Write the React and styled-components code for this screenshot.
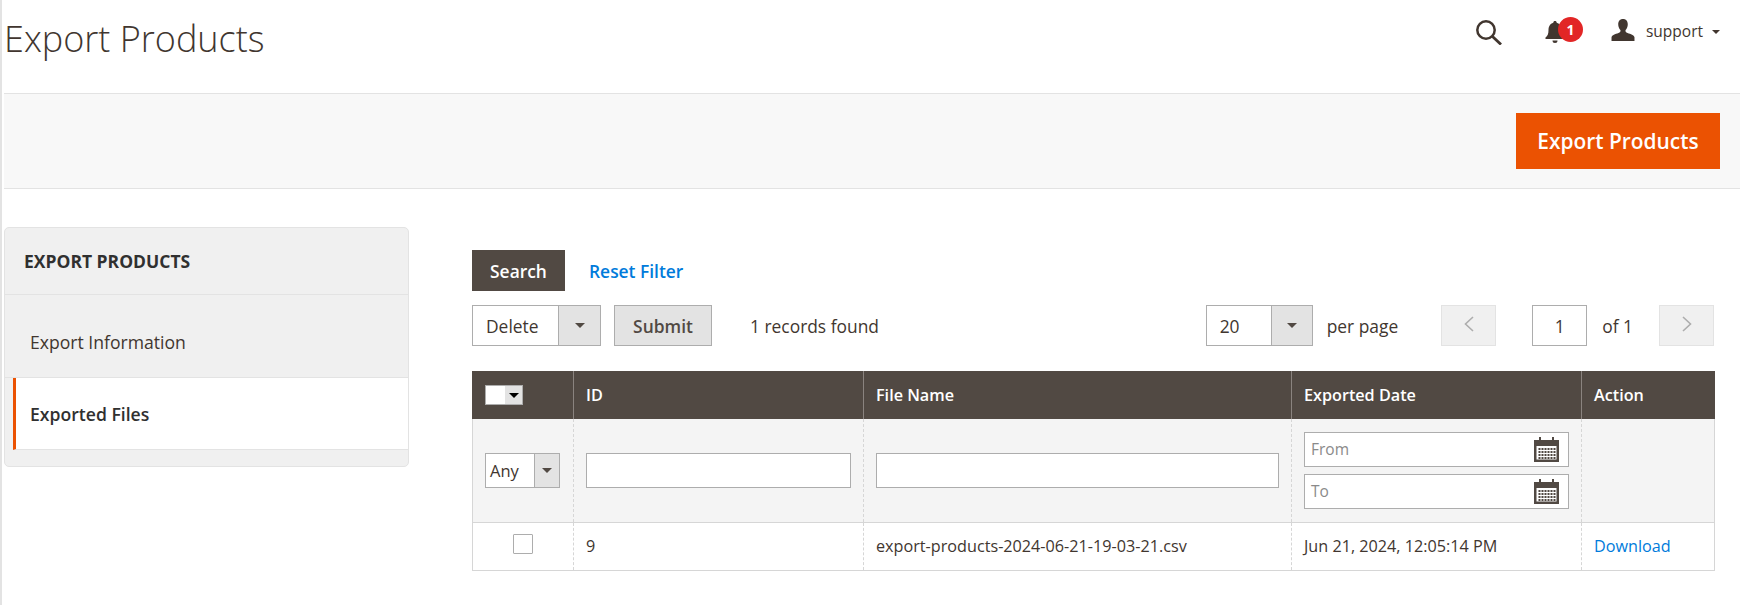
import React from 'react'
import styled, { createGlobalStyle } from 'styled-components'

const GlobalStyle = createGlobalStyle`
  * { box-sizing: border-box; }
  html, body { margin: 0; padding: 0; background: #fff; }
  body {
    font-family: "Open Sans", "Liberation Sans", sans-serif;
    font-size: 17.4px;
    color: #41362f;
  }
`

const Page = styled.div`
  width: 1740px;
  height: 605px;
  overflow: hidden;
  border-left: 2px solid #e3e3e3;
  padding-left: 2px;
`
const Header = styled.header`
  height: 93px;
  display: flex;
  align-items: flex-start;
  justify-content: space-between;
  padding-right: 20px;
`
const Title = styled.h1`
  margin: 16px 0 0;
  font-size: 36px;
  line-height: 46px;
  font-weight: 300;
  color: #41362f;
`
const Tools = styled.div`
  display: flex;
  align-items: center;
  height: 30px;
  margin-top: 17px;
`
const IconSlot = styled.span`
  display: flex;
  position: relative;
  margin-left: ${p => p.$left || 0}px;
  margin-top: ${p => p.$top || 0}px;
`
const Badge = styled.span`
  position: absolute;
  left: 13px;
  top: -4px;
  width: 25px;
  height: 25px;
  border-radius: 50%;
  background: #e22626;
  color: #fff;
  font-size: 14px;
  font-weight: 700;
  line-height: 25px;
  text-align: center;
`
const UserName = styled.span`
  font-size: 15.5px;
  color: #41362f;
  margin-left: 11px;
  margin-top: -3px;
`
const Caret = styled.span`
  width: 0;
  height: 0;
  margin-left: ${p => p.$left || 0}px;
  border-left: ${p => p.$size}px solid transparent;
  border-right: ${p => p.$size}px solid transparent;
  border-top: ${p => p.$size}px solid ${p => p.$color || '#514943'};
`
const ActionBar = styled.div`
  height: 96px;
  display: flex;
  align-items: center;
  justify-content: flex-end;
  padding-right: 20px;
  background: #f8f8f8;
  border-top: 1px solid #e3e3e3;
  border-bottom: 1px solid #e3e3e3;
`
const PrimaryButton = styled.button`
  width: 204px;
  height: 56px;
  border: 1px solid #eb5202;
  background: #eb5202;
  color: #fff;
  font-family: inherit;
  font-size: 20.9px;
  font-weight: 600;
  padding: 0;
`
const Content = styled.div`
  display: flex;
  align-items: flex-start;
  padding-top: 38px;
`
const Sidebar = styled.aside`
  width: 405px;
  flex: none;
  padding-bottom: 16px;
  background: #f0f0f0;
  border: 1px solid #e3e3e3;
  border-radius: 5px;
`
const SidebarTitle = styled.div`
  height: 67px;
  padding-left: 19px;
  display: flex;
  align-items: center;
  font-size: 17.5px;
  font-weight: 700;
  color: #303030;
  border-bottom: 1px solid #e3e3e3;
`
const SideItem = styled.div`
  display: flex;
  align-items: center;
  height: ${p => (p.$active ? 72 : 83)}px;
  margin-left: ${p => (p.$active ? 8 : 0)}px;
  padding-left: ${p => (p.$active ? 14 : 25)}px;
  padding-top: ${p => (p.$active ? 0 : 11)}px;
  font-size: 17.6px;
  font-weight: ${p => (p.$active ? 600 : 400)};
  color: ${p => (p.$active ? '#303030' : '#41362f')};
  background: ${p => (p.$active ? '#fff' : 'transparent')};
  border-left: ${p => (p.$active ? '3px solid #eb5202' : 'none')};
  border-bottom: 1px solid #e3e3e3;
`
const Grid = styled.section`
  width: 1242px;
  margin-left: 63px;
  padding-top: 23px;
`
const Row = styled.div`
  display: flex;
  align-items: center;
  height: 41px;
`
const PagerRow = styled(Row)`
  margin-top: 14px;
  margin-bottom: 25px;
`
const DarkButton = styled.button`
  width: 93px;
  height: 41px;
  padding: 0;
  border: 1px solid #514943;
  background: #514943;
  color: #fff;
  font-family: inherit;
  font-size: 17.4px;
  font-weight: 600;
`
const LinkText = styled.a`
  color: #007bdb;
  font-size: ${p => p.$size || 17.4}px;
  font-weight: ${p => p.$weight || 400};
  margin-left: ${p => p.$left || 0}px;
`
const SelectBox = styled.div`
  width: ${p => p.$width}px;
  height: ${p => p.$height || 41}px;
  flex: none;
  display: flex;
  background: #fff;
  border: 1px solid #adadad;
`
const SelectValue = styled.span`
  flex: 1;
  padding-left: ${p => p.$pad}px;
  display: flex;
  align-items: center;
  font-size: ${p => p.$size || 17.4}px;
  color: #41362f;
`
const SelectArrow = styled.span`
  width: ${p => p.$width}px;
  flex: none;
  display: flex;
  align-items: center;
  justify-content: center;
  background: #e3e3e3;
  border-left: 1px solid #adadad;
`
const GreyButton = styled.button`
  width: 98px;
  height: 41px;
  margin-left: 13px;
  padding: 0;
  border: 1px solid #adadad;
  background: #e3e3e3;
  color: #514943;
  font-family: inherit;
  font-size: 17.4px;
  font-weight: 600;
`
const PlainText = styled.span`
  font-size: 17.4px;
  color: #41362f;
  margin-left: ${p => p.$left}px;
`
const Spacer = styled.div`
  flex: 1;
`
const PageStep = styled.span`
  width: 55px;
  height: 41px;
  flex: none;
  display: flex;
  align-items: center;
  justify-content: center;
  padding-bottom: 3px;
  background: #f0f0f0;
  border: 1px solid #e3e3e3;
  margin-left: ${p => p.$left}px;
`
const PageInput = styled.span`
  width: 55px;
  height: 41px;
  flex: none;
  display: flex;
  align-items: center;
  justify-content: center;
  margin-left: 36px;
  font-size: 17.4px;
  background: #fff;
  border: 1px solid #adadad;
`
const Table = styled.table`
  width: 1242px;
  table-layout: fixed;
  border-collapse: collapse;
`
const HeadCell = styled.th`
  height: 48px;
  padding: 0 12px;
  background: #514943;
  color: #fff;
  font-size: 16.2px;
  font-weight: 600;
  text-align: left;
  border-left: 1px solid #8a837f;
  border-right: 1px solid #8a837f;
  &:first-child { border-left-color: #514943; }
  &:last-child { border-right-color: #514943; }
`
const HeadPicker = styled.div`
  display: flex;
  height: 20px;
  width: 38px;
  border: 1px solid #adadad;
`
const PickerBox = styled.span`
  width: 19px;
  background: #fff;
`
const PickerArrow = styled.span`
  flex: 1;
  display: flex;
  align-items: center;
  justify-content: center;
  background: #e3e3e3;
`
const FilterCell = styled.td`
  height: 103px;
  padding: 0 12px;
  background: #f4f4f4;
  vertical-align: middle;
  border-left: 1px dashed #d6d6d6;
  border-right: 1px dashed #d6d6d6;
  border-bottom: 1px solid #d6d6d6;
  &:first-child { border-left: 1px solid #d6d6d6; }
  &:last-child { border-right: 1px solid #d6d6d6; }
`
const DataCell = styled.td`
  height: 48px;
  padding: 0 12px;
  font-size: 16.2px;
  color: #41362f;
  text-align: ${p => (p.$center ? 'center' : 'left')};
  border-left: 1px dashed #d6d6d6;
  border-right: 1px dashed #d6d6d6;
  border-bottom: 1px solid #d6d6d6;
  &:first-child { border-left: 1px solid #d6d6d6; }
  &:last-child { border-right: 1px solid #d6d6d6; }
`
const TextInput = styled.div`
  height: 35px;
  background: #fff;
  border: 1px solid #adadad;
`
const DateStack = styled.div`
  display: flex;
  flex-direction: column;
  gap: 7px;
`
const DateInput = styled.div`
  height: 35px;
  display: flex;
  align-items: center;
  justify-content: space-between;
  padding: 0 9px 0 6px;
  font-size: 15.5px;
  color: #8a8a8a;
  background: #fff;
  border: 1px solid #adadad;
`
const CheckBox = styled.span`
  display: inline-block;
  width: 20px;
  height: 20px;
  vertical-align: middle;
  background: #fff;
  border: 1px solid #adadad;
  border-radius: 1px;
  margin-top: -8px;
`

const SearchIcon = () => (
  <svg width="27" height="26" viewBox="0 0 27 26" fill="none" stroke="#41362f">
    <circle cx="11" cy="11" r="8.700" strokeWidth="2.500" />
    <path d="M17.500 17.500L26 25.500" strokeWidth="2.800" />
  </svg>
)

const BellIcon = () => (
  <svg width="20" height="23" viewBox="0 0 20 23" fill="#41362f">
    <path d="M10 0c1 0 1.700.7 1.700 1.700C15 2.500 16.500 5.500 16.500 9c0 4 1 6 3 7.500V18H.5v-1.500c2-1.500 3-3.500 3-7.500 0-3.500 1.500-6.500 4.800-7.300C8.300.7 9 0 10 0z" />
    <path d="M7.500 19.500h5a2.500 2.500 0 0 1-5 0z" />
  </svg>
)

const UserIcon = () => (
  <svg width="24" height="22" viewBox="0 0 25 23" fill="#41362f">
    <path d="M12.500 0c3.300 0 5 2.300 5 5.500 0 2.500-1 4.800-2.300 6-.5 1.500.3 2.500 2 3.100 3.500 1.200 6.800 2 7.300 4.400V23H.5v-4c.5-2.400 3.800-3.200 7.300-4.400 1.700-.6 2.500-1.600 2-3.100-1.300-1.200-2.300-3.500-2.300-6C7.500 2.300 9.200 0 12.500 0z" />
  </svg>
)

const Chevron = ({ left }) => (
  <svg width="10" height="16" viewBox="0 0 10 16" fill="none" stroke="#adadad" strokeWidth="1.600">
    <path d={left ? 'M9 1L1.500 8L9 15' : 'M1 1L8.500 8L1 15'} />
  </svg>
)

const CalendarIcon = () => (
  <svg width="25" height="25" viewBox="0 0 25 25">
    <rect x="0" y="3" width="25" height="22" fill="#514943" />
    <rect x="2.500" y="9" width="20" height="13.500" fill="#fff" />
    <rect x="5" y="0" width="2" height="6" fill="#514943" />
    <rect x="18" y="0" width="2" height="6" fill="#514943" />
    {[11, 14, 17, 20].map(y =>
      [4.500, 7.500, 10.500, 13.500, 16.500, 19.500].map(x => (
        <rect key={`${x}-${y}`} x={x} y={y} width="2" height="2" fill="#514943" />
      ))
    )}
  </svg>
)

const App = () => (
  <>
    <GlobalStyle />
    <Page>
      <Header>
        <Title>Export Products</Title>
        <Tools>
          <IconSlot><SearchIcon /></IconSlot>
          <IconSlot $left={43}>
            <BellIcon />
            <Badge>1</Badge>
          </IconSlot>
          <IconSlot $left={46} $top={-4}><UserIcon /></IconSlot>
          <UserName>support</UserName>
          <Caret $size={4.500} $left={9} $color="#41362f" />
        </Tools>
      </Header>
      <ActionBar>
        <PrimaryButton>Export Products</PrimaryButton>
      </ActionBar>
      <Content>
        <Sidebar>
          <SidebarTitle>EXPORT PRODUCTS</SidebarTitle>
          <SideItem>Export Information</SideItem>
          <SideItem $active>Exported Files</SideItem>
        </Sidebar>
        <Grid>
          <Row>
            <DarkButton>Search</DarkButton>
            <LinkText $left={24} $weight={600}>Reset Filter</LinkText>
          </Row>
          <PagerRow>
            <SelectBox $width={129}>
              <SelectValue $pad={13}>Delete</SelectValue>
              <SelectArrow $width={42}><Caret $size={5} /></SelectArrow>
            </SelectBox>
            <GreyButton>Submit</GreyButton>
            <PlainText $left={38}>1 records found</PlainText>
            <Spacer />
            <SelectBox $width={107}>
              <SelectValue $pad={13}>20</SelectValue>
              <SelectArrow $width={41}><Caret $size={5} /></SelectArrow>
            </SelectBox>
            <PlainText $left={14}>per page</PlainText>
            <PageStep $left={43}><Chevron left /></PageStep>
            <PageInput>1</PageInput>
            <PlainText $left={15}>of 1</PlainText>
            <PageStep $left={26}><Chevron /></PageStep>
          </PagerRow>
          <Table>
            <colgroup>
              <col width="101" />
              <col width="290" />
              <col width="428" />
              <col width="290" />
              <col width="133" />
            </colgroup>
            <thead>
              <tr>
                <HeadCell>
                  <HeadPicker>
                    <PickerBox />
                    <PickerArrow><Caret $size={5} $color="#000" /></PickerArrow>
                  </HeadPicker>
                </HeadCell>
                <HeadCell>ID</HeadCell>
                <HeadCell>File Name</HeadCell>
                <HeadCell>Exported Date</HeadCell>
                <HeadCell>Action</HeadCell>
              </tr>
            </thead>
            <tbody>
              <tr>
                <FilterCell>
                  <SelectBox $width={75} $height={35}>
                    <SelectValue $pad={4} $size={16.500}>Any</SelectValue>
                    <SelectArrow $width={25}><Caret $size={5} /></SelectArrow>
                  </SelectBox>
                </FilterCell>
                <FilterCell><TextInput /></FilterCell>
                <FilterCell><TextInput /></FilterCell>
                <FilterCell>
                  <DateStack>
                    <DateInput>From<CalendarIcon /></DateInput>
                    <DateInput>To<CalendarIcon /></DateInput>
                  </DateStack>
                </FilterCell>
                <FilterCell />
              </tr>
              <tr>
                <DataCell $center><CheckBox /></DataCell>
                <DataCell>9</DataCell>
                <DataCell>export-products-2024-06-21-19-03-21.csv</DataCell>
                <DataCell>Jun 21, 2024, 12:05:14 PM</DataCell>
                <DataCell><LinkText $size={16.200}>Download</LinkText></DataCell>
              </tr>
            </tbody>
          </Table>
        </Grid>
      </Content>
    </Page>
  </>
)

export default App
